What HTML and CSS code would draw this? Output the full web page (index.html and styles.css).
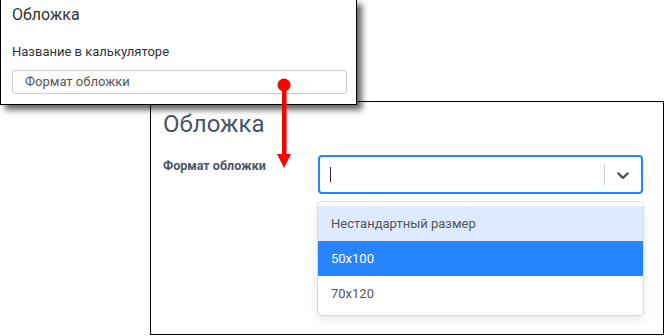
FILE: index.html
```html
<html>
	<head>
		<title>Обложка | формат</title>
		<link rel="stylesheet" href="styles.css">
	</head>
	<body>
		<div class="desk">
			<div class="win win-back">
				<h2 class="big-title">Обложка</h2>
				<div class="field-row">
					<div class="field-label">Формат обложки</div>
					<div class="field-control">
						<div class="select">
							<div class="select-value"><span class="caret"></span></div>
							<span class="select-sep"></span>
							<div class="select-ind">
								<svg width="20" height="20" viewBox="0 0 20 20"><path d="M4.516 7.548c0.436-0.446 1.043-0.481 1.576 0l3.908 3.747 3.908-3.747c0.533-0.481 1.141-0.446 1.574 0 0.436 0.445 0.408 1.197 0 1.615-0.406 0.418-4.695 4.502-4.695 4.502-0.217 0.223-0.502 0.335-0.787 0.335s-0.57-0.112-0.789-0.335c0 0-4.287-4.084-4.695-4.502s-0.436-1.170 0-1.615z"/></svg>
							</div>
						</div>
						<ul class="menu">
							<li class="focused">Нестандартный размер</li>
							<li class="selected">50x100</li>
							<li>70x120</li>
						</ul>
					</div>
				</div>
			</div>
			<div class="win win-front">
				<h3 class="small-title">Обложка</h3>
				<div class="calc-label">Название в калькуляторе</div>
				<div class="calc-input">Формат обложки</div>
			</div>
			<svg class="pointer" width="665" height="336" viewBox="0 0 665 336">
				<circle cx="284" cy="85" r="6.5" fill="#f00"/>
				<rect x="282" y="85" width="4.5" height="72" fill="#f00"/>
				<polygon points="277,154 291,154 284,168" fill="#f00"/>
			</svg>
		</div>
	</body>
</html>
```

FILE: styles.css
```css
body {
	margin: 0;
	background: #fff;
	font-family: Roboto, "Noto Sans", sans-serif;
}
.desk {
	position: relative;
	width: 665px;
	height: 336px;
	overflow: hidden;
}
.win {
	position: absolute;
	background: #fff;
	border: 1px solid #000;
	box-sizing: border-box;
}
/* small window on top */
.win-front {
	left: 0;
	top: -1px;
	width: 357px;
	height: 106px;
	padding: 5px 9px 0 11px;
	box-shadow: 5px 5px 6px rgba(0, 0, 0, 0.6);
}
.small-title {
	margin: 0;
	font-size: 16px;
	line-height: 20px;
	font-weight: normal;
	color: #333;
}
.calc-label {
	margin-top: 19px;
	font-size: 13px;
	line-height: 16px;
	color: #333;
}
.calc-input {
	margin-top: 10px;
	height: 24px;
	box-sizing: border-box;
	border: 1px solid #ccc;
	border-radius: 3px;
	padding: 0 12px;
	font-size: 13px;
	line-height: 22px;
	color: #555;
}
/* big window behind */
.win-back {
	left: 150px;
	top: 101px;
	width: 514px;
	height: 234px;
	padding: 8px 20px 0 12px;
}
.big-title {
	margin: 0;
	font-size: 24px;
	line-height: 28px;
	font-weight: normal;
	color: #4a5468;
}
.field-row {
	display: flex;
	margin-top: 17px;
}
.field-label {
	width: 155px;
	padding-top: 3px;
	font-size: 12.5px;
	line-height: 16px;
	font-weight: bold;
	color: #4a5468;
}
.field-control {
	width: 325px;
}
.select {
	display: flex;
	align-items: center;
	height: 39px;
	box-sizing: border-box;
	border: 2px solid #2684ff;
	border-radius: 4px;
}
.select-value {
	flex: 1;
	padding-left: 10px;
	display: flex;
	align-items: center;
}
.caret {
	display: inline-block;
	width: 1px;
	height: 15px;
	background: #222;
}
.select-sep {
	width: 1px;
	height: 20px;
	background: #ccc;
}
.select-ind {
	padding: 0 8px;
	display: flex;
	fill: #555;
}
.menu {
	list-style: none;
	margin: 8px 0 0;
	padding: 4px 0;
	border-radius: 4px;
	box-shadow: 0 0 0 1px rgba(0, 0, 0, 0.1), 0 4px 11px rgba(0, 0, 0, 0.1);
	font-size: 13px;
	color: #555;
}
.menu li {
	height: 35px;
	line-height: 35px;
	padding: 0 13px;
}
.menu li.focused {
	background: #deebff;
}
.menu li.selected {
	background: #2684ff;
	color: #fff;
}
.pointer {
	position: absolute;
	left: 0;
	top: 0;
}
```
